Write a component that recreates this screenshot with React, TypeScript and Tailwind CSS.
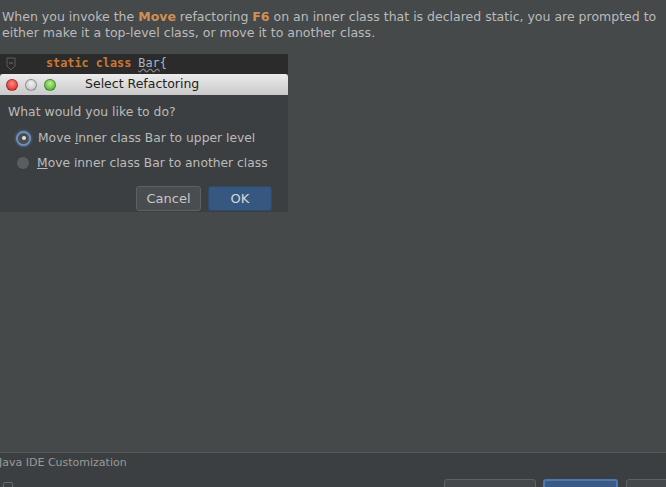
function TrafficLight({ color }: { color: string }) {
  return (
    <span
      className="block h-[12px] w-[12px] rounded-full border border-black/30"
      style={{ background: color }}
    />
  );
}

function Radio({ checked }: { checked?: boolean }) {
  return checked ? (
    <span className="flex h-[15px] w-[15px] shrink-0 items-center justify-center rounded-full border-2 border-[#6a8fb8] bg-[#4a4d50] shadow-[0_0_3px_#5a88c0]">
      <span className="h-[4px] w-[4px] rounded-full bg-[#e0e0e0]" />
    </span>
  ) : (
    <span className="block h-[14px] w-[14px] shrink-0 rounded-full border border-[#3a3a3a] bg-[#5a5d60]" />
  );
}

function FoldMarker() {
  return (
    <svg width="10" height="14" viewBox="0 0 10 14" className="ml-[6px]">
      <path d="M1 1 H9 V9 L5 13 L1 9 Z" fill="none" stroke="#5c5c5c" />
      <path d="M3 6 H7" stroke="#6e6e6e" />
    </svg>
  );
}

function App() {
  const options = [
    { pre: "Move ", u: "i", post: "nner class Bar to upper level", checked: true },
    { pre: "", u: "M", post: "ove inner class Bar to another class", checked: false },
  ];

  return (
    <div className="flex h-[487px] w-[666px] flex-col overflow-hidden bg-[#45494a] font-['DejaVu_Sans',sans-serif] text-[#bbbbbb]">
      <div className="flex-1">
        <p className="px-[2px] pt-[9px] text-[12.5px] leading-[16px]">
          When you invoke the <b className="text-[#d08f54]">Move</b> refactoring{" "}
          <b className="text-[#d08f54]">F6</b> on an inner class that is declared static, you are prompted to
          either make it a top-level class, or move it to another class.
        </p>

        <div className="mt-[13px] w-[288px]">
          <div className="flex h-[20px] items-center bg-[#2b2b2b] pr-[1px]">
            <FoldMarker />
            <span className="ml-[30px] whitespace-nowrap font-['DejaVu_Sans_Mono',monospace] text-[11.8px] font-bold text-[#cc7832]">
              static class{" "}
              <span className="font-normal text-[#a9b7c6] underline decoration-wavy decoration-[#8a8a8a]">Bar</span>
              <span className="font-normal text-[#a9b7c6]">{"{"}</span>
            </span>
          </div>

          <div className="flex h-[21px] items-center gap-[7px] rounded-t-[3px] bg-gradient-to-b from-[#ececec] to-[#c9c9c9] pl-[6px]">
            <TrafficLight color="radial-gradient(circle at 50% 35%, #ff8a80, #d8201a)" />
            <TrafficLight color="radial-gradient(circle at 50% 35%, #f4f4f4, #b8b8b8)" />
            <TrafficLight color="radial-gradient(circle at 50% 35%, #b8f090, #3ca820)" />
            <span className="ml-[22px] text-[12.5px] text-[#222222]">Select Refactoring</span>
          </div>

          <div className="bg-[#3c3f41] px-[8px] pb-[1px] pt-[9px]">
            <div className="whitespace-nowrap text-[12.4px] leading-[16px]">What would you like to do?</div>
            <div className="mt-[10px] flex flex-col gap-[9px] pl-[8px]">
              {options.map((o, i) => (
                <label key={i} className="flex items-center gap-[7px] whitespace-nowrap text-[12.3px] leading-[16px]">
                  <Radio checked={o.checked} />
                  <span>
                    {o.pre}
                    <span className="underline">{o.u}</span>
                    {o.post}
                  </span>
                </label>
              ))}
            </div>
            <div className="mt-[15px] flex justify-end gap-[7px] pr-[8px]">
              <button className="h-[25px] w-[65px] rounded-[3px] border border-[#5e6163] bg-[#4a4d4f] text-[13px] text-[#c8c8c8]">
                Cancel
              </button>
              <button className="h-[25px] w-[64px] rounded-[3px] border border-[#2f4a6b] bg-[#365880] text-[13px] text-[#d8d8d8]">
                OK
              </button>
            </div>
          </div>
        </div>
      </div>

      <div className="h-[35px] shrink-0 border-t border-[#555859] bg-[#3c3f41]">
        <div className="ml-[-1px] mt-[3px] whitespace-nowrap text-[11px] leading-[14px] text-[#9a9a9a]">
          Java IDE Customization
        </div>
        <div className="mt-[9px] flex">
          <span className="ml-[3px] mt-[3px] h-[10px] w-[10px] shrink-0 rounded-[2px] border border-[#6a6a6a]" />
          <span className="ml-[431px] h-[20px] w-[92px] shrink-0 rounded-[3px] border border-[#5e6163] bg-[#45484a]" />
          <span className="ml-[7px] h-[20px] w-[75px] shrink-0 rounded-[3px] border-2 border-[#4a78b0] bg-[#3a5a85]" />
          <span className="ml-[8px] h-[20px] w-[60px] shrink-0 rounded-[3px] border border-[#5e6163] bg-[#45484a]" />
        </div>
      </div>
    </div>
  );
}

export default App;
